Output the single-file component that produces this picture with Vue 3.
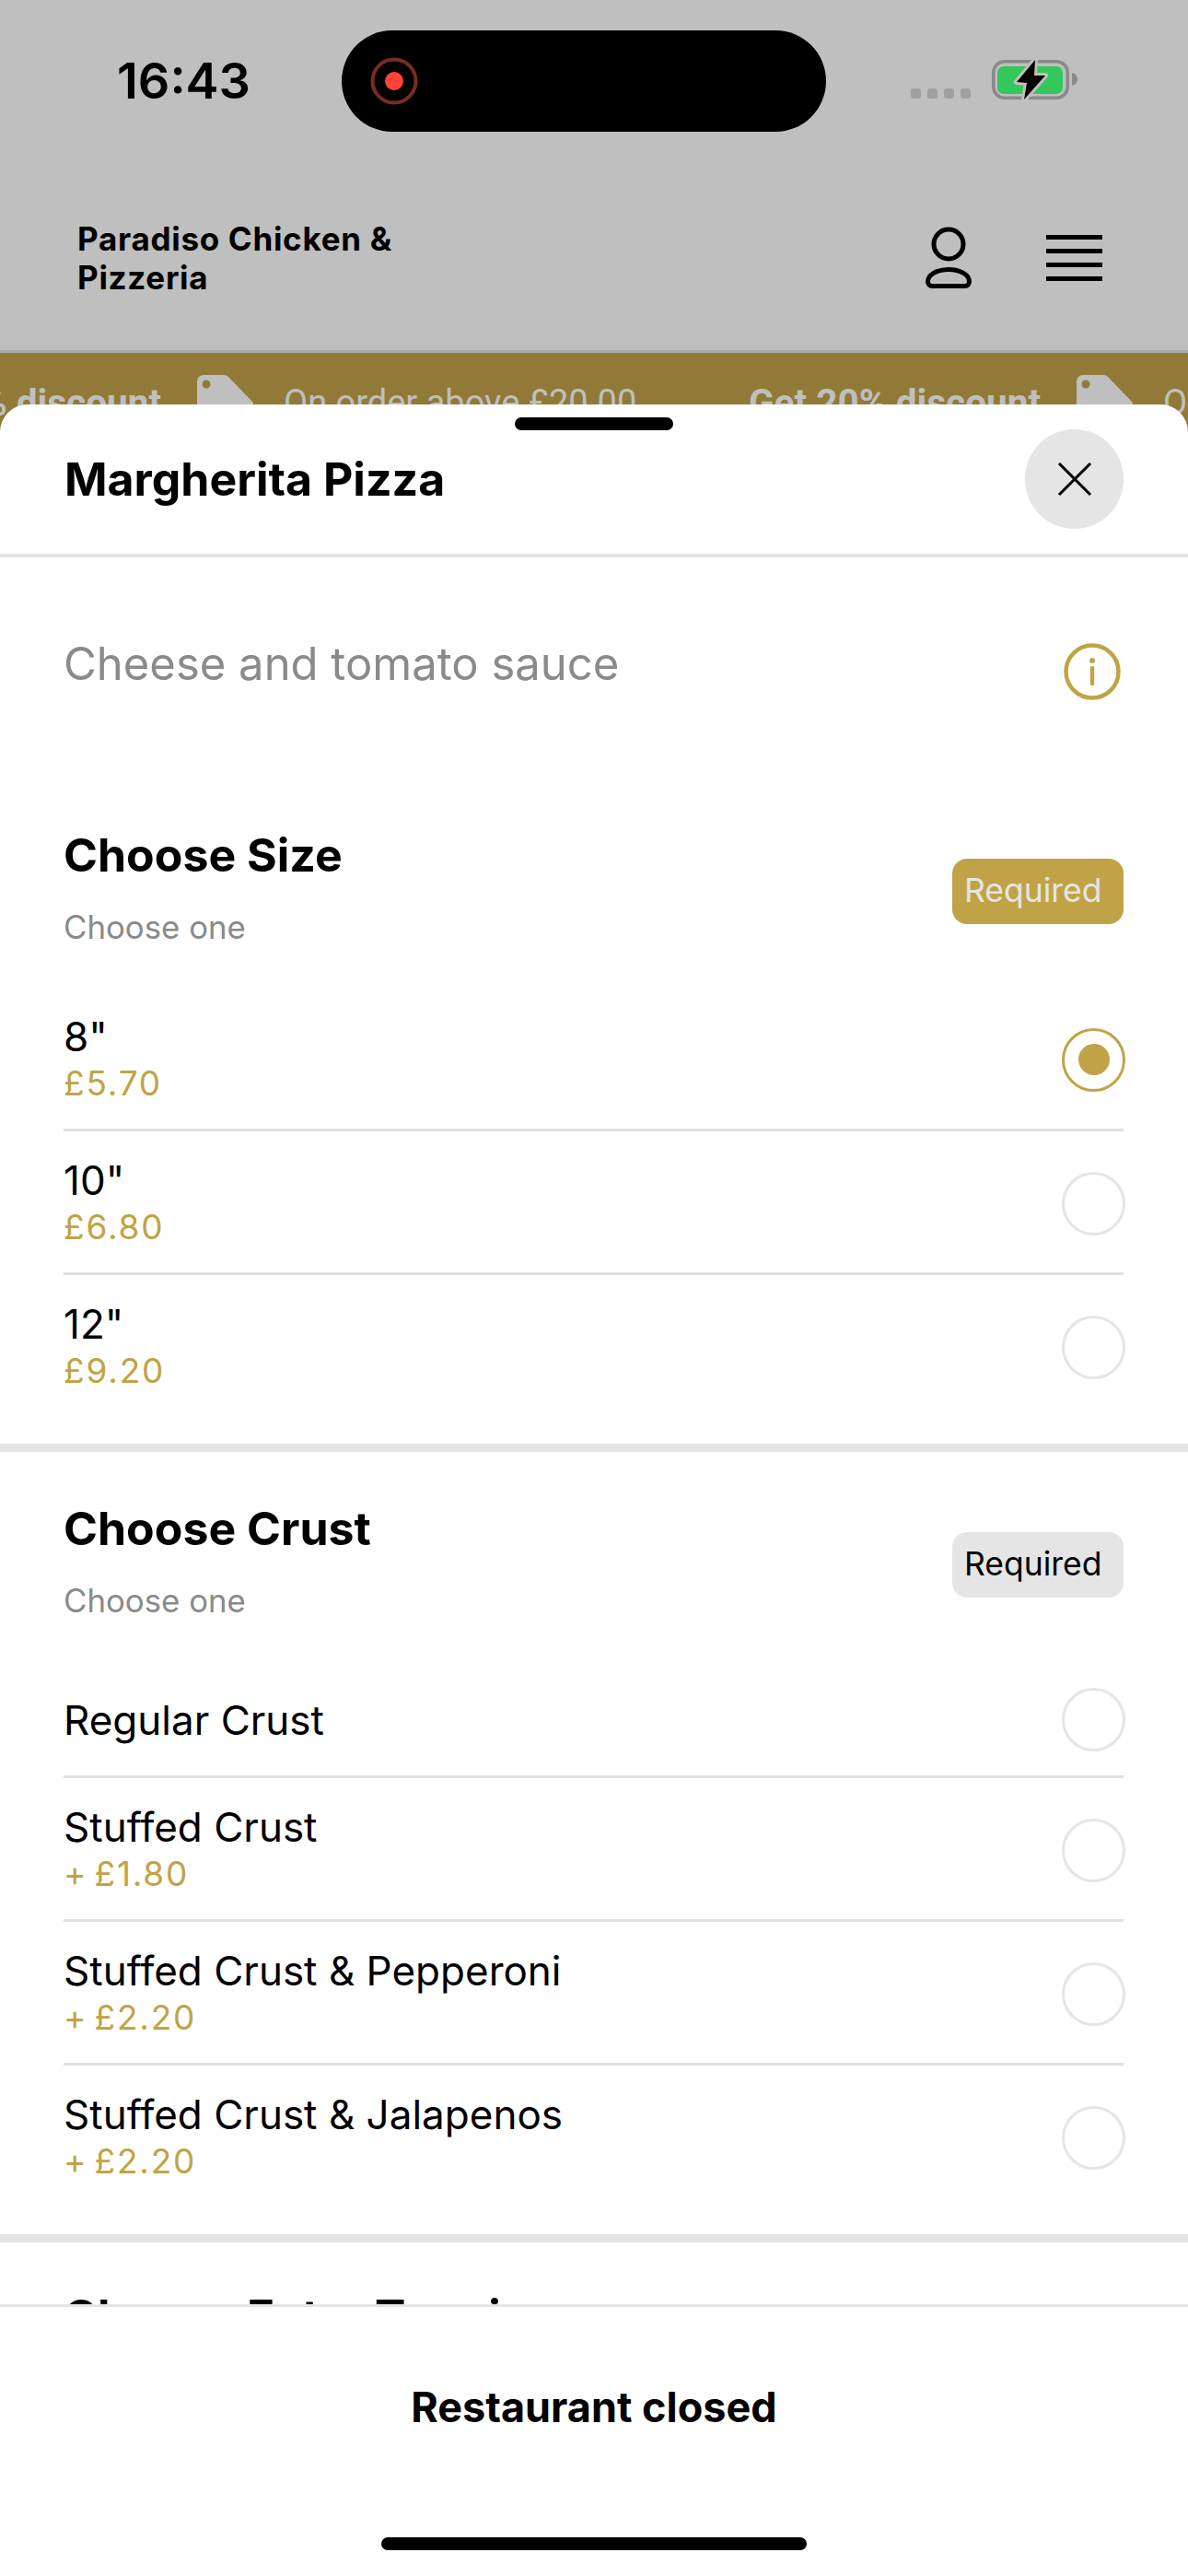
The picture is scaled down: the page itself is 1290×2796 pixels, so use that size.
<script setup>
const sizes = [
  { name: '8"', price: '£5.70', selected: true },
  { name: '10"', price: '£6.80' },
  { name: '12"', price: '£9.20' },
]
const crusts = [
  { name: 'Regular Crust' },
  { name: 'Stuffed Crust', price: '+ £1.80' },
  { name: 'Stuffed Crust & Pepperoni', price: '+ £2.20' },
  { name: 'Stuffed Crust & Jalapenos', price: '+ £2.20' },
]
const promos = [1, 2, 3]
</script>

<template>
  <main class="page">
    <div class="status">
      <span class="time">16:43</span>
      <div class="island">
        <svg width="54" height="54" viewBox="0 0 54 54">
          <circle cx="27" cy="27" r="23.5" fill="none" stroke="#7a2b23" stroke-width="4" />
          <circle cx="27" cy="27" r="10" fill="#ff453a" />
        </svg>
      </div>
      <div class="status-right">
        <div class="signal"><i></i><i></i><i></i><i></i></div>
        <svg class="battery" width="96" height="50" viewBox="0 0 96 50">
          <rect x="2.75" y="6.75" width="80.5" height="39.5" rx="12" fill="none" stroke="#8a8a8a" stroke-width="3.5" />
          <rect x="7" y="12" width="71" height="30" rx="7" fill="#34c759" />
          <path d="M88 19c4 1 6 4 6 7s-2 6-6 7z" fill="#8a8a8a" />
          <path d="M48 5 L28 29 L39 30 L36 48 L59 22 L47 22 Z" fill="#000" stroke="#bfbfbf" stroke-width="6" stroke-linejoin="round" paint-order="stroke" />
        </svg>
      </div>
    </div>

    <header class="topbar">
      <h1 class="shop">Paradiso Chicken &amp;<br />Pizzeria</h1>
      <div class="top-icons">
        <svg width="56" height="68" viewBox="0 0 56 68">
          <circle cx="28" cy="20" r="16" fill="none" stroke="#000" stroke-width="5" />
          <path d="M28 47.5c-13 0-22.500 6-22.500 13 0 3 2 5 5 5h35c3 0 5-2 5-5 0-7-9.500-13-22.500-13z" fill="none" stroke="#000" stroke-width="5" />
        </svg>
        <div class="burger"><i></i><i></i><i></i><i></i></div>
      </div>
    </header>

    <div class="banner">
      <div class="track">
        <div v-for="p in promos" :key="p" class="promo">
          <b>Get 20% discount</b>
          <svg width="62" height="60" viewBox="0 0 62 60">
            <path d="M1 8a7 7 0 0 1 7-7h22a7 7 0 0 1 5 2l26 27a6 6 0 0 1 0 8L40 59H8a7 7 0 0 1-7-7z" fill="#bfbfbf" />
            <circle cx="11" cy="11" r="4.500" fill="#917a38" />
          </svg>
          <span>On order above £20.00</span>
        </div>
      </div>
    </div>

    <section class="sheet">
      <div class="handle"></div>
      <div class="sheet-head">
        <h2>Margherita Pizza</h2>
        <button class="close">
          <svg width="38" height="38" viewBox="0 0 38 38">
            <path d="M2 2 L36 36 M36 2 L2 36" stroke="#000" stroke-width="3" />
          </svg>
        </button>
      </div>

      <div class="scroll">
        <div class="desc">
          <p>Cheese and tomato sauce</p>
          <svg width="62" height="62" viewBox="0 0 62 62">
            <circle cx="31" cy="31" r="28.500" fill="none" stroke="#c1a347" stroke-width="4.500" />
            <circle cx="31" cy="19" r="3" fill="#c1a347" />
            <path d="M31 27V44" stroke="#c1a347" stroke-width="4.500" stroke-linecap="round" />
          </svg>
        </div>

        <div class="group">
          <div class="group-head">
            <div>
              <h3>Choose Size</h3>
              <p class="hint">Choose one</p>
            </div>
            <span class="badge gold">Required</span>
          </div>
          <div v-for="o in sizes" :key="o.name" class="row">
            <div>
              <div class="name">{{ o.name }}</div>
              <div class="price">{{ o.price }}</div>
            </div>
            <span class="radio" :class="{ on: o.selected }"></span>
          </div>
        </div>

        <div class="group">
          <div class="group-head">
            <div>
              <h3>Choose Crust</h3>
              <p class="hint">Choose one</p>
            </div>
            <span class="badge">Required</span>
          </div>
          <div v-for="o in crusts" :key="o.name" class="row" :class="{ short: !o.price }">
            <div>
              <div class="name">{{ o.name }}</div>
              <div v-if="o.price" class="price">{{ o.price }}</div>
            </div>
            <span class="radio"></span>
          </div>
        </div>

        <div class="group extras">
          <div class="group-head">
            <div>
              <h3>Choose Extra Toppings</h3>
            </div>
          </div>
        </div>
      </div>

      <footer class="foot">
        <strong>Restaurant closed</strong>
        <div class="home"></div>
      </footer>
    </section>
  </main>
</template>

<style scoped>
.page {
  position: relative;
  width: 1290px;
  height: 2796px;
  overflow: hidden;
  background: #bfbfbf;
  font-family: Inter, "Liberation Sans", sans-serif;
  color: #000;
}

.status {
  height: 178px;
  display: flex;
  align-items: flex-start;
  padding-top: 33px;
  box-sizing: border-box;
}

.time {
  width: 371px;
  padding-left: 127px;
  box-sizing: border-box;
  font-size: 54px;
  font-weight: 600;
  line-height: 110px;
}

.island {
  width: 526px;
  height: 110px;
  border-radius: 55px;
  background: #000;
  display: flex;
  align-items: center;
  padding-left: 30px;
  box-sizing: border-box;
}

.status-right {
  display: flex;
  margin-left: 92px;
  height: 76px;
  align-items: flex-start;
}

.signal {
  display: flex;
  gap: 7px;
  margin-top: 63px;
}

.signal i {
  width: 11px;
  height: 11px;
  border-radius: 3px;
  background: #a0a0a0;
}

.battery {
  margin: 27px 0 0 22px;
}

.topbar {
  height: 202px;
  border-bottom: 3px solid #aaaaaa;
  box-sizing: content-box;
  display: flex;
  justify-content: space-between;
  align-items: center;
  padding: 0 93px 0 84px;
}

.shop {
  margin: 2px 0 0;
  font-size: 35px;
  line-height: 42px;
  font-weight: 700;
  letter-spacing: 0.7px;
}

.top-icons {
  display: flex;
  align-items: center;
  gap: 78px;
}

.burger {
  display: flex;
  flex-direction: column;
  gap: 10px;
  width: 61px;
  margin-top: 2px;
}

.burger i {
  height: 5px;
  background: #000;
}

.banner {
  height: 100px;
  background: #917a38;
  overflow: hidden;
}

.track {
  display: flex;
  margin-left: -142px;
  padding-top: 23px;
  width: 4000px;
}

.promo {
  display: flex;
  align-items: flex-start;
  flex: none;
  width: 955px;
  font-family: Roboto, sans-serif;
  color: #bfbfbf;
  line-height: 60px;
}

.promo b {
  width: 320px;
  flex: none;
  padding-top: 1px;
  font-size: 40.5px;
  font-weight: 700;
}

.promo svg {
  margin: 0 33px 0 35px;
  flex: none;
}

.promo span {
  padding-top: 1px;
  font-size: 38px;
  font-weight: 400;
}

.sheet {
  position: absolute;
  left: 0;
  right: 0;
  top: 439px;
  bottom: 0;
  background: #fff;
  border-radius: 30px 30px 0 0;
  display: flex;
  flex-direction: column;
}

.handle {
  position: absolute;
  top: 14px;
  left: 559px;
  width: 172px;
  height: 14px;
  border-radius: 7px;
  background: #000;
}

.sheet-head {
  height: 166px;
  flex: none;
  box-sizing: border-box;
  border-bottom: 4px solid #e5e5e5;
  display: flex;
  justify-content: space-between;
  align-items: center;
  padding: 0 70px;
}

.sheet-head h2 {
  margin: 0;
  font-size: 50px;
  font-weight: 700;
}

.close {
  width: 107px;
  height: 108px;
  border: none;
  padding: 0;
  border-radius: 50%;
  background: #e5e5e5;
  display: flex;
  align-items: center;
  justify-content: center;
}

.scroll {
  flex: 1;
  overflow: hidden;
}

.desc {
  display: flex;
  justify-content: space-between;
  padding: 85px 73px 0 69px;
  height: 240px;
  box-sizing: border-box;
}

.desc p {
  margin: 0;
  font-size: 49px;
  line-height: 62px;
  color: #8a8a8a;
}

.desc svg {
  margin-top: 8px;
}

.group {
  padding: 0 70px 27px 69px;
  border-bottom: 9px solid #e5e5e5;
}

.group-head {
  display: flex;
  justify-content: space-between;
  align-items: flex-start;
  padding-top: 53px;
  height: 227px;
  box-sizing: border-box;
}

.group.extras .group-head {
  padding-top: 50px;
}

.group h3 {
  margin: 0;
  font-size: 50px;
  font-weight: 700;
  line-height: 60px;
}

.hint {
  margin: 26px 0 0;
  font-size: 34.8px;
  line-height: 44px;
  color: #8a8a8a;
}

.badge {
  margin-top: 34px;
  width: 186px;
  height: 71px;
  box-sizing: border-box;
  padding-left: 13px;
  border-radius: 16px;
  background: #e5e5e5;
  font-size: 35.5px;
  line-height: 69px;
}

.badge.gold {
  background: #c1a347;
  color: #e5e5e5;
}

.row {
  height: 156px;
  box-sizing: border-box;
  padding-top: 3px;
  display: flex;
  justify-content: space-between;
  align-items: center;
  border-bottom: 3px solid #e0e0e0;
}

.row.short {
  height: 127px;
}

.row:last-child {
  border-bottom: none;
  padding-top: 0;
}

.name {
  font-size: 44px;
  line-height: 52px;
}

.price {
  font-size: 37px;
  letter-spacing: 1.8px;
  word-spacing: -5px;
  line-height: 50px;
  color: #c1a347;
}

.radio {
  width: 69px;
  height: 69px;
  margin-right: -2px;
  box-sizing: border-box;
  border: 3px solid #e5e5e5;
  border-radius: 50%;
  display: flex;
  align-items: center;
  justify-content: center;
}

.radio.on {
  border-color: #c1a347;
}

.radio.on::after {
  content: "";
  width: 34px;
  height: 34px;
  border-radius: 50%;
  background: #c1a347;
}

.foot {
  position: relative;
  height: 295px;
  flex: none;
  box-sizing: border-box;
  background: #fff;
  border-top: 3px solid #e5e5e5;
  text-align: center;
  padding-top: 82px;
}

.foot strong {
  font-size: 45px;
  line-height: 54px;
  font-weight: 700;
}

.home {
  position: absolute;
  left: 414px;
  top: 250px;
  width: 462px;
  height: 14px;
  border-radius: 7px;
  background: #000;
}
</style>
